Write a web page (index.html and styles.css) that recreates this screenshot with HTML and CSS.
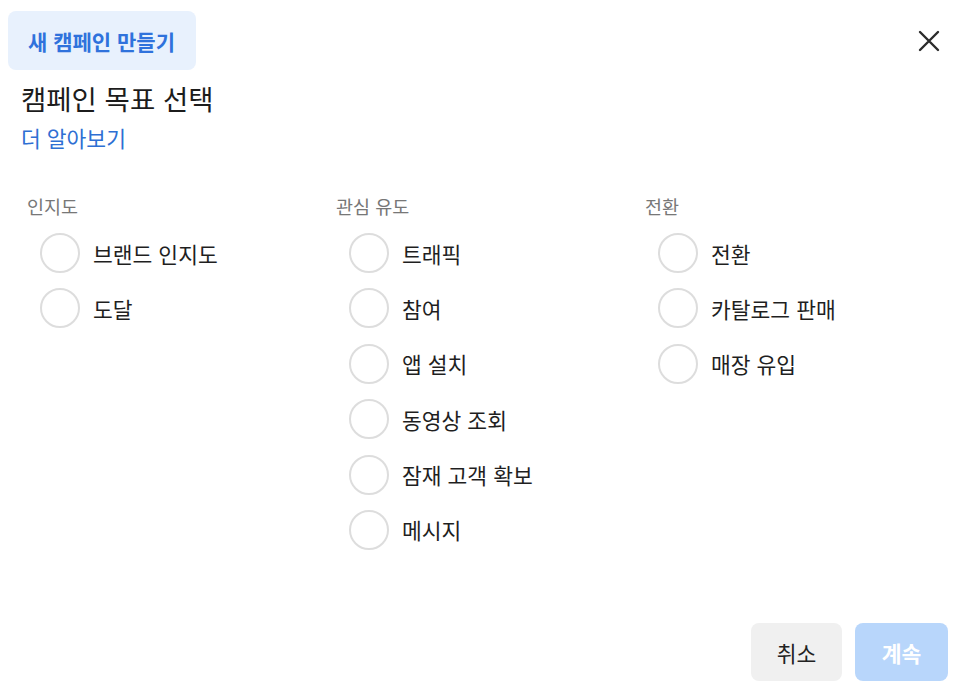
FILE: index.html
```html
<!DOCTYPE html>
<html lang="ko">
<head>
<meta charset="utf-8">
<link rel="stylesheet" href="styles.css">
</head>
<body>
<div class="dialog">
  <div class="header">
    <div class="tab">새 캠페인 만들기</div>
    <button class="close" aria-label="닫기">
      <svg width="22" height="22" viewBox="0 0 22 22"><path d="M2 2 L20 20 M20 2 L2 20" stroke="#2b2b2b" stroke-width="2.4" stroke-linecap="round" fill="none"/></svg>
    </button>
  </div>
  <h1 class="title">캠페인 목표 선택</h1>
  <a class="link">더 알아보기</a>
  <div class="columns">
    <div class="col">
      <div class="col-head">인지도</div>
      <div class="opt"><span class="radio"></span><span class="label">브랜드 인지도</span></div>
      <div class="opt"><span class="radio"></span><span class="label">도달</span></div>
    </div>
    <div class="col">
      <div class="col-head">관심 유도</div>
      <div class="opt"><span class="radio"></span><span class="label">트래픽</span></div>
      <div class="opt"><span class="radio"></span><span class="label">참여</span></div>
      <div class="opt"><span class="radio"></span><span class="label">앱 설치</span></div>
      <div class="opt"><span class="radio"></span><span class="label">동영상 조회</span></div>
      <div class="opt"><span class="radio"></span><span class="label">잠재 고객 확보</span></div>
      <div class="opt"><span class="radio"></span><span class="label">메시지</span></div>
    </div>
    <div class="col">
      <div class="col-head">전환</div>
      <div class="opt"><span class="radio"></span><span class="label">전환</span></div>
      <div class="opt"><span class="radio"></span><span class="label">카탈로그 판매</span></div>
      <div class="opt"><span class="radio"></span><span class="label">매장 유입</span></div>
    </div>
  </div>
  <div class="footer">
    <button class="btn btn-cancel">취소</button>
    <button class="btn btn-next">계속</button>
  </div>
</div>
</body>
</html>
```

FILE: styles.css
```css
html, body {
  margin: 0;
  padding: 0;
  background: #ffffff;
}
body {
  font-family: "Noto Sans CJK KR", "Noto Sans", sans-serif;
  color: #1f1f1f;
}
.dialog {
  height: 700px;
  box-sizing: border-box;
  display: flex;
  flex-direction: column;
}
.header {
  display: flex;
  justify-content: space-between;
  align-items: center;
  padding: 11px 0 0 8px;
}
.tab {
  height: 59px;
  box-sizing: border-box;
  padding: 0 21px 0 20px;
  display: flex;
  align-items: center;
  background: #e8f1fd;
  border-radius: 8px;
  color: #2f72dc;
  font-size: 21px;
  font-weight: 700;
}
.close {
  background: none;
  border: 0;
  padding: 0;
  margin-right: 26px;
  width: 22px;
  height: 22px;
  display: flex;
}
.title {
  margin: 10px 0 0 21px;
  font-size: 27.5px;
  font-weight: 400;
  line-height: 36px;
  color: #1c1c1c;
}
.link {
  margin: 7px 0 0 21px;
  font-size: 21.5px;
  line-height: 30px;
  color: #2e6fd3;
}
.columns {
  display: grid;
  grid-template-columns: 309px 309px 309px;
  padding: 40px 0 0 27px;
}
.col-head {
  font-size: 18.5px;
  line-height: 26px;
  color: #777777;
  margin-bottom: 14px;
}
.opt {
  display: flex;
  align-items: center;
  gap: 13px;
  height: 40px;
  padding-left: 13px;
  margin-bottom: 15.4px;
}
.radio {
  width: 40px;
  height: 40px;
  box-sizing: border-box;
  border: 2px solid #dddddd;
  border-radius: 50%;
  flex: none;
}
.label {
  font-size: 21.5px;
  color: #1f1f1f;
}
.footer {
  margin-top: auto;
  display: flex;
  justify-content: flex-end;
  gap: 13px;
  padding: 0 18px 19px 0;
}
.btn {
  height: 58px;
  border: 0;
  border-radius: 8px;
  font-family: "Noto Sans CJK KR", "Noto Sans", sans-serif;
  font-size: 21.5px;
}
.btn-cancel {
  width: 91px;
  background: #f0f0f0;
  color: #222222;
}
.btn-next {
  width: 93px;
  background: #b8d6fb;
  color: #ffffff;
  font-weight: 700;
}
```
